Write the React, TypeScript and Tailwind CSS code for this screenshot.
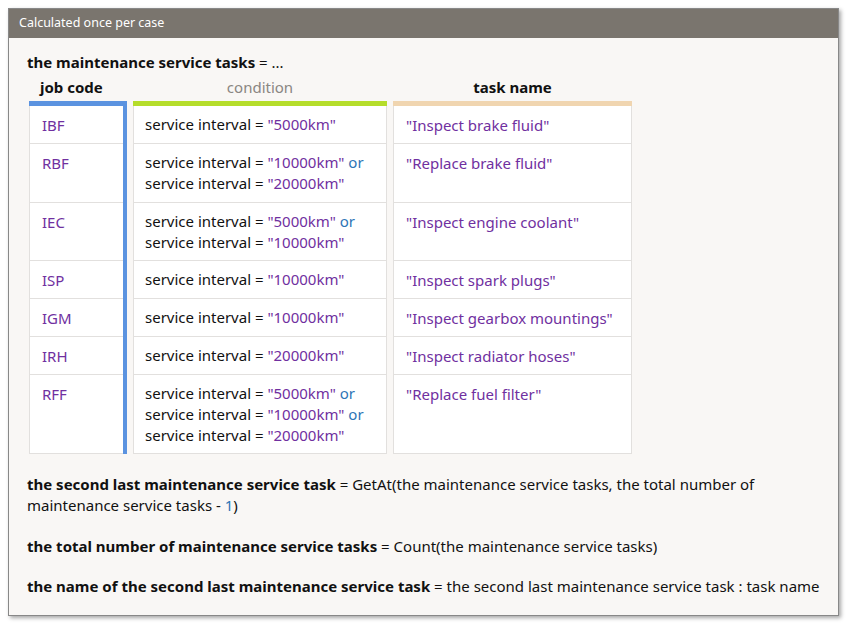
const font = { fontFamily: '"Segoe UI", "Noto Sans", "Open Sans", sans-serif' };

const S = ({ children }: { children: string }) => <span className="text-[#7030a0]">"{children}"</span>;
const Or = () => <span className="text-[#2e75b6]"> or</span>;

const heights = ["h-[38px]", "h-[59px]", "h-[58px]", "h-[38px]", "h-[38px]", "h-[38px]", "h-[79px]"];

const rows = [
  { code: "IBF", cond: [["5000km"]], name: "Inspect brake fluid" },
  { code: "RBF", cond: [["10000km"], ["20000km"]], name: "Replace brake fluid" },
  { code: "IEC", cond: [["5000km"], ["10000km"]], name: "Inspect engine coolant" },
  { code: "ISP", cond: [["10000km"]], name: "Inspect spark plugs" },
  { code: "IGM", cond: [["10000km"]], name: "Inspect gearbox mountings" },
  { code: "IRH", cond: [["20000km"]], name: "Inspect radiator hoses" },
  { code: "RFF", cond: [["5000km"], ["10000km"], ["20000km"]], name: "Replace fuel filter" },
];

export default function App() {
  return (
    <div className="w-[850px] h-[625px] bg-white p-[8px] text-[15px] text-[#111]" style={font}>
      <div className="w-[831px] h-[608px] border border-[#888] bg-[#f9f7f5] shadow-[2px_2px_4px_rgba(0,0,0,0.35)]">
        <div className="h-[29px] bg-[#7a756e] text-white text-[12.5px] flex items-center px-[10px]">Calculated once per case</div>
        <div className="px-[18px] pt-[14px]">
          <div className="leading-[20px]"><b>the maintenance service tasks</b> = ...</div>
          <div className="flex gap-[6px] ml-[2px] mt-[2px]">
            <div className="w-[98px]">
              <div className="h-[27px] leading-[27px] font-bold pl-[11px]">job code</div>
              <div className="border-t-[5px] border-r-[4px] border-[#5b93e0]">
                {rows.map((r, i) => (
                  <div key={i} className={`${heights[i]} bg-white border-l border-b border-[#e2e0de] pl-[12px] pt-[8px] text-[#7030a0]`}>{r.code}</div>
                ))}
              </div>
            </div>
            <div className="w-[254px]">
              <div className="h-[27px] leading-[27px] text-center text-[#8a8682]">condition</div>
              <div className="border-t-[5px] border-[#b5dd2b]">
                {rows.map((r, i) => (
                  <div key={i} className={`${heights[i]} bg-white border-x border-b border-[#e2e0de] pl-[11px] pt-[8px] leading-[21px]`}>
                    {r.cond.map((c, j) => (
                      <div key={j}>service interval = <S>{c[0]}</S>{j < r.cond.length - 1 && <Or />}</div>
                    ))}
                  </div>
                ))}
              </div>
            </div>
            <div className="w-[239px]">
              <div className="h-[27px] leading-[27px] text-center font-bold">task name</div>
              <div className="border-t-[5px] border-[#f0d5b0]">
                {rows.map((r, i) => (
                  <div key={i} className={`${heights[i]} bg-white border-x border-b border-[#e2e0de] pl-[12px] pt-[8px]`}><S>{r.name}</S></div>
                ))}
              </div>
            </div>
          </div>
          <div className="mt-[20px] leading-[21px]">
            <b>the second last maintenance service task</b> = GetAt(the maintenance service tasks, the total number of maintenance service tasks - <span className="text-[#2e75b6]">1</span>)
          </div>
          <div className="mt-[20px] leading-[21px]"><b>the total number of maintenance service tasks</b> = Count(the maintenance service tasks)</div>
          <div className="mt-[19px] leading-[21px]"><b>the name of the second last maintenance service task</b> = the second last maintenance service task : task name</div>
        </div>
      </div>
    </div>
  );
}
